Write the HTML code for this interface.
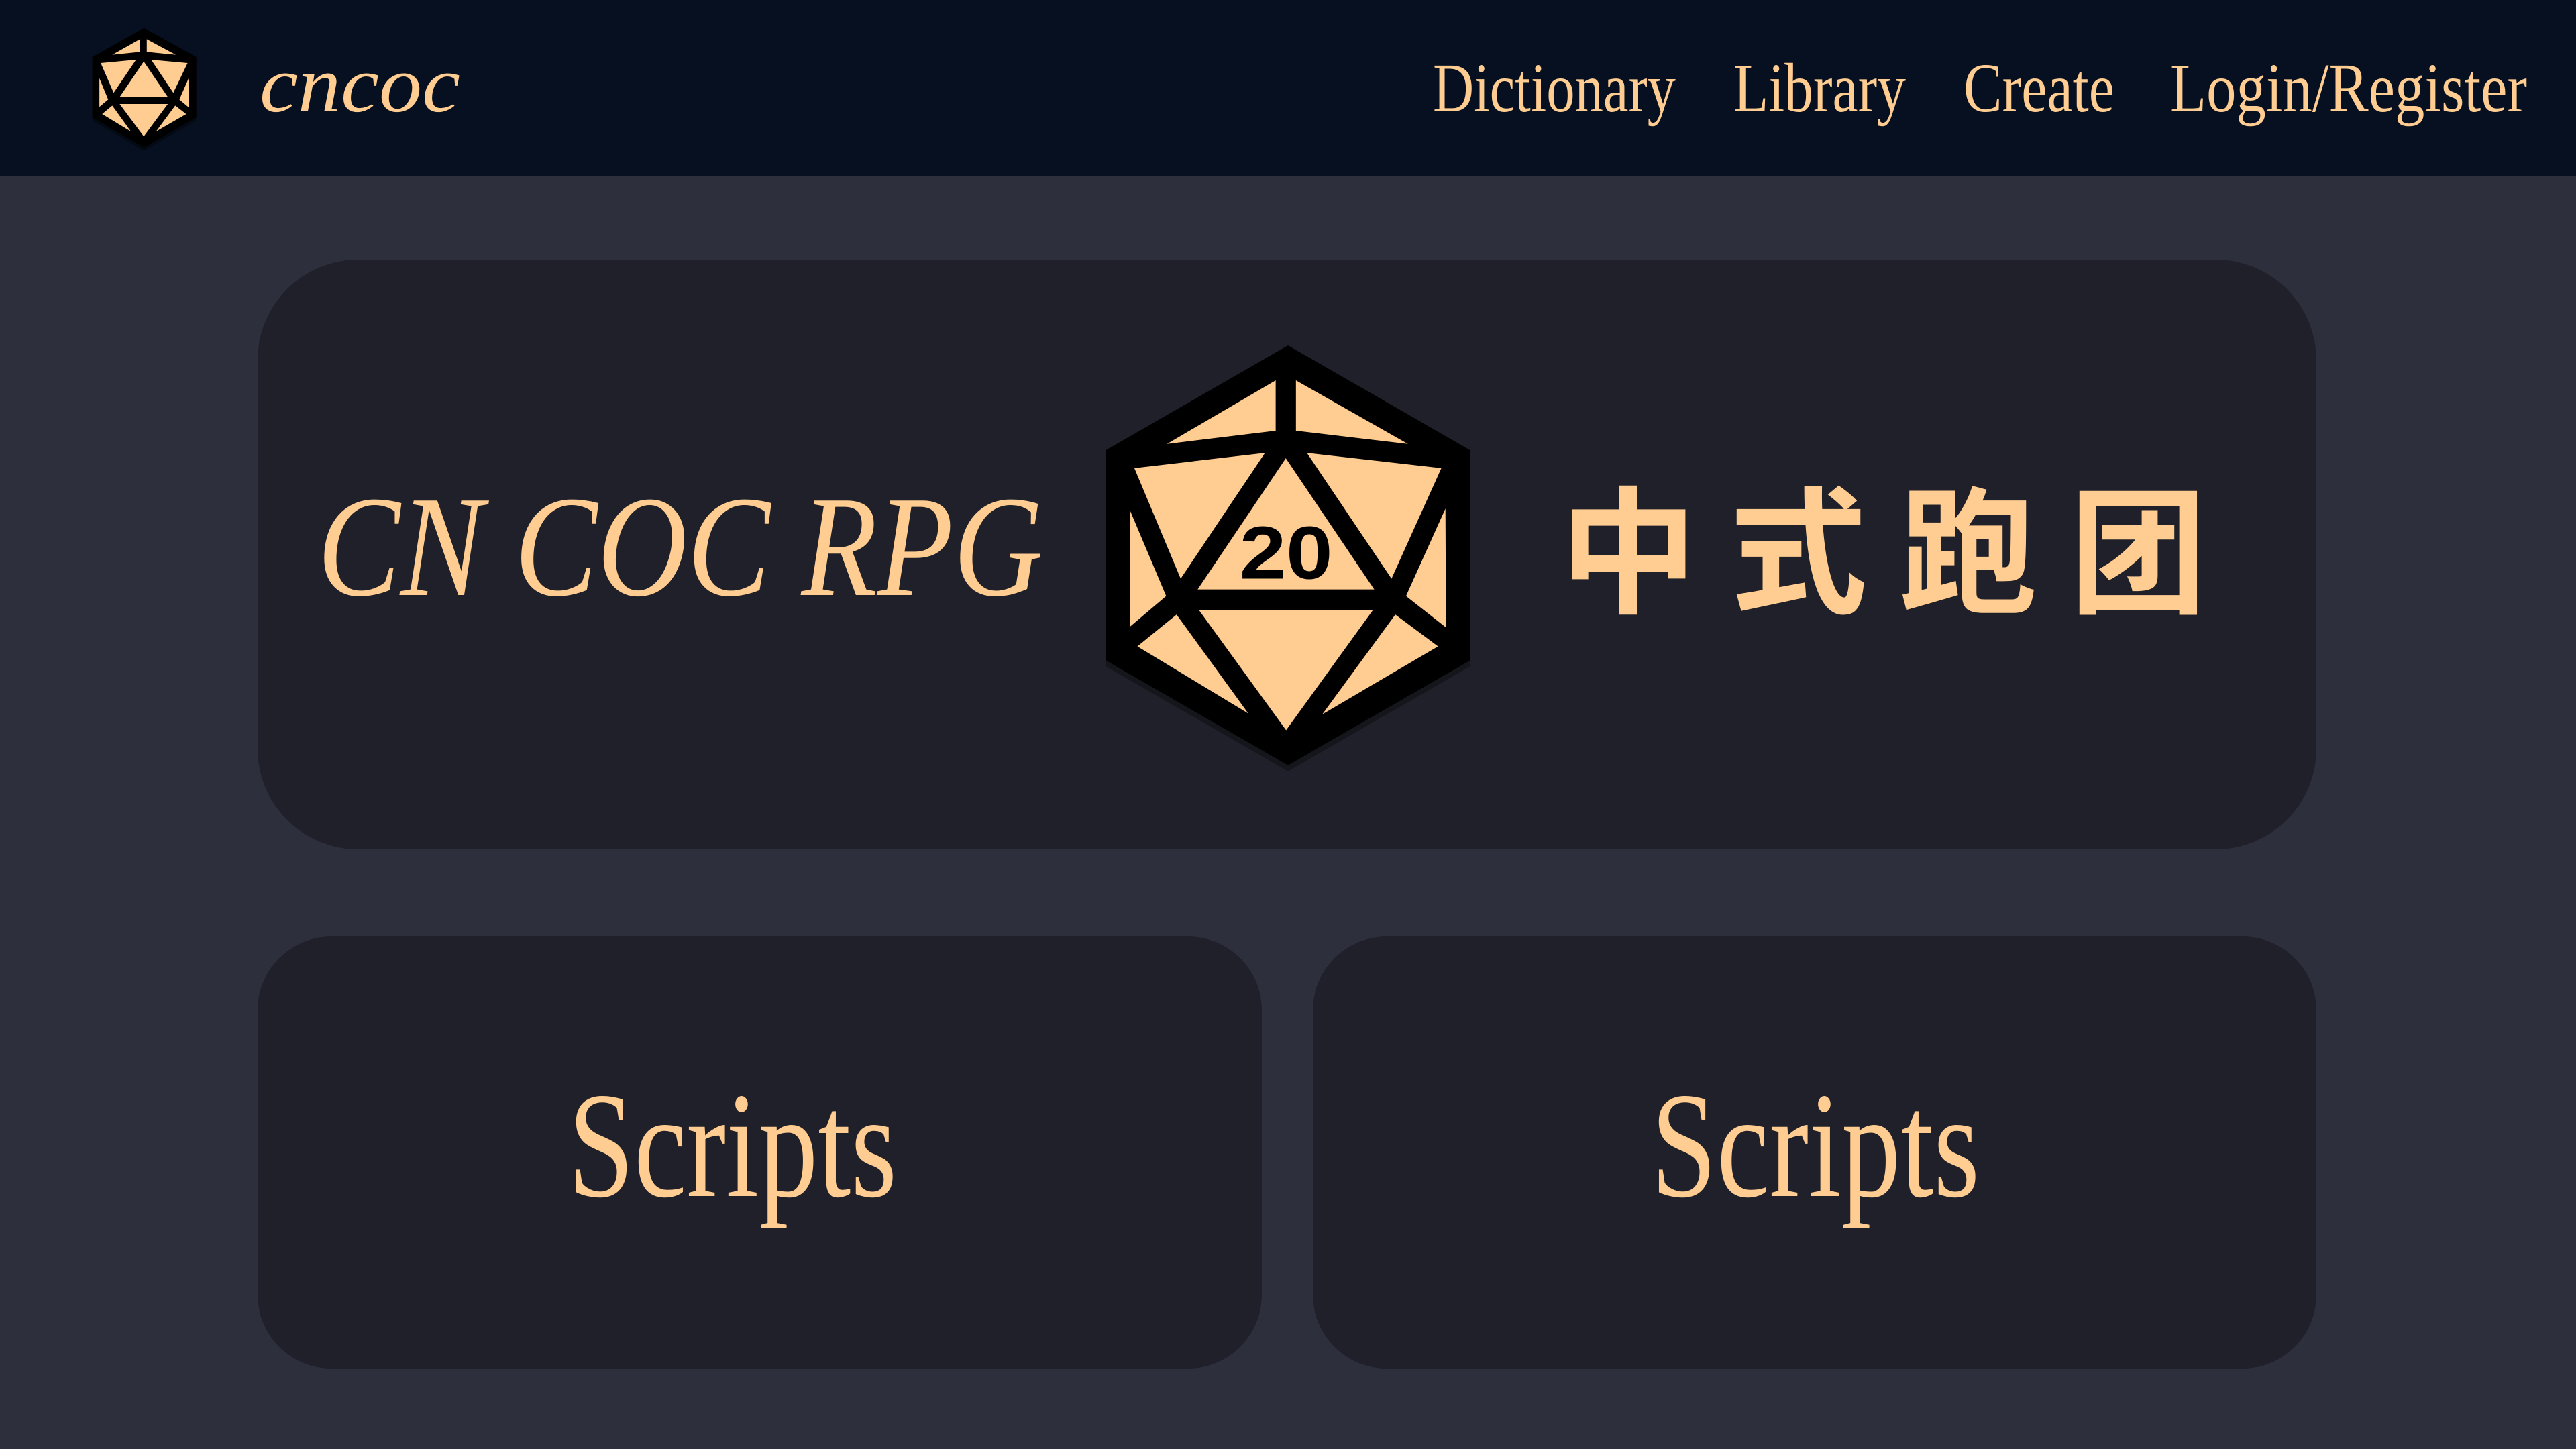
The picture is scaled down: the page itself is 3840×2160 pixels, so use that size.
<!DOCTYPE html>
<html><head><meta charset="utf-8"><style>
html,body{margin:0;padding:0;width:3840px;height:2160px;overflow:hidden;background:#2d303c;}
.hdr{position:absolute;left:0;top:0;width:3840px;height:262px;background:#061020;}
.card{position:absolute;background:#1f2029;}
svg{position:absolute;}
text{font-family:"Liberation Serif",serif;fill:#ffcd91;}
</style></head><body>
<div class="hdr"></div>
<div class="card" style="left:384px;top:387px;width:3069px;height:879px;border-radius:150px;"></div>
<div class="card" style="left:384px;top:1396px;width:1497px;height:644px;border-radius:110px;"></div>
<div class="card" style="left:1957px;top:1396px;width:1496px;height:644px;border-radius:110px;"></div>

<svg style="left:100px;top:20px" width="640" height="240" viewBox="0 0 1568 720" preserveAspectRatio="none">
<polygon points="281,80 92,210 92,480 281,615 472,480 472,210" fill="#000" opacity="0.35"/>
<polygon points="281,65 92,195 92,465 281,600 472,465 472,195" fill="#000"/>
<g fill="#ffcd91">
<polygon points="266,115 266,172 165,185"/>
<polygon points="291,115 291,172 397,185"/>
<polygon points="123,222 252,207 170,355"/>
<polygon points="307,207 440,222 388,355"/>
<polygon points="280,215 368,374 192,374"/>
<polygon points="118,290 150,385 118,418"/>
<polygon points="444,290 444,420 410,385"/>
<polygon points="128,450 165,412 233,528"/>
<polygon points="192,405 368,405 280,550"/>
<polygon points="395,412 435,450 325,528"/>
</g></svg>

<svg style="left:0;top:0" width="3840" height="2160" viewBox="0 0 3840 2160">
<text x="387" y="166" font-size="120" font-style="italic" textLength="299" lengthAdjust="spacingAndGlyphs">cncoc</text>
<text x="2136" y="166" font-size="104" textLength="362" lengthAdjust="spacingAndGlyphs">Dictionary</text>
<text x="2584" y="166" font-size="104" textLength="257" lengthAdjust="spacingAndGlyphs">Library</text>
<text x="2927" y="166" font-size="104" textLength="225" lengthAdjust="spacingAndGlyphs">Create</text>
<text x="3235" y="166" font-size="104" textLength="532" lengthAdjust="spacingAndGlyphs">Login/Register</text>
<text x="473" y="887" font-size="215" font-style="italic" textLength="1082" lengthAdjust="spacingAndGlyphs">CN COC RPG</text>
<text x="2325" y="898" font-size="205" font-weight="bold" style='font-family:"Noto Sans CJK SC",sans-serif' textLength="965" lengthAdjust="spacing">中式跑团</text>
<text x="847" y="1783" font-size="225" textLength="490" lengthAdjust="spacingAndGlyphs">Scripts</text>
<text x="2461" y="1783" font-size="225" textLength="490" lengthAdjust="spacingAndGlyphs">Scripts</text>
</svg>

<svg style="left:1620px;top:480px" width="640" height="700" viewBox="0 0 1568 1568" preserveAspectRatio="none">
<polygon points="735,98 70,448 70,1150 735,1500 1400,1150 1400,448" fill="#000" opacity="0.3"/>
<polygon points="735,78 70,428 70,1130 735,1480 1400,1130 1400,428" fill="#000"/>
<g fill="#ffcd91">
<polygon points="690,195 690,363 293,407"/>
<polygon points="764,195 764,363 1173,407"/>
<polygon points="174,488 651,437 343,857"/>
<polygon points="804,437 1295,488 1113,857"/>
<polygon points="727,455 1050,893 405,893"/>
<polygon points="157,627 290,915 157,1018"/>
<polygon points="1310,623 1312,1020 1166,915"/>
<polygon points="185,1083 328,977 590,1307"/>
<polygon points="409,961 1046,961 728,1363"/>
<polygon points="1127,977 1283,1083 860,1310"/>
</g>
<text x="558" y="857" font-size="250" font-weight="bold" textLength="340" lengthAdjust="spacingAndGlyphs" style='font-family:"Liberation Sans",sans-serif;fill:#000'>20</text>
</svg>
</body></html>
